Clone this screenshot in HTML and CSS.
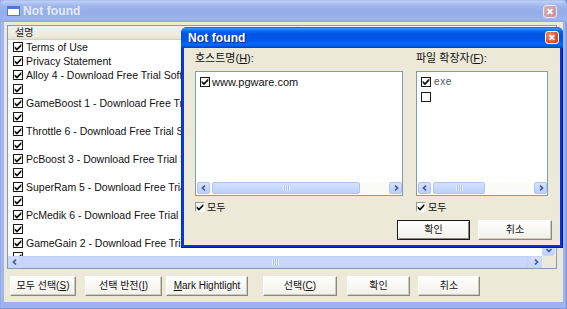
FILE: index.html
```html
<!DOCTYPE html>
<html>
<head>
<meta charset="utf-8">
<link rel="stylesheet" href="styles.css">
</head>
<body>
<div class="win">
  <div class="win-title">
    <span class="app-icon"><svg viewBox="0 0 13 10"><rect x="0.5" y="0.5" width="12" height="9" fill="#fff" stroke="#5A78C8"/><rect x="1" y="1" width="11" height="2" fill="#4F73D6"/></svg></span>
    <span class="title-text inactive-text">Not found</span>
    <span class="close close-off"><svg viewBox="0 0 13 13"><path d="M4 4 L9 9 M9 4 L4 9"/></svg></span>
  </div>
  <div class="win-body">
    <div class="list">
      <div class="list-main">
        <div class="list-head"><span class="head-cell">설명</span><span class="head-cell2"></span></div>
        <div class="row"><span class="cb on"></span><span>Terms of Use</span></div>
        <div class="row"><span class="cb on"></span><span>Privacy Statement</span></div>
        <div class="row"><span class="cb on"></span><span>Alloy 4 - Download Free Trial Software</span></div>
        <div class="row"><span class="cb on"></span><span></span></div>
        <div class="row"><span class="cb on"></span><span>GameBoost 1 - Download Free Trial Software</span></div>
        <div class="row"><span class="cb on"></span><span></span></div>
        <div class="row"><span class="cb on"></span><span>Throttle 6 - Download Free Trial Software</span></div>
        <div class="row"><span class="cb on"></span><span></span></div>
        <div class="row"><span class="cb on"></span><span>PcBoost 3 - Download Free Trial Software</span></div>
        <div class="row"><span class="cb on"></span><span></span></div>
        <div class="row"><span class="cb on"></span><span>SuperRam 5 - Download Free Trial Software</span></div>
        <div class="row"><span class="cb on"></span><span></span></div>
        <div class="row"><span class="cb on"></span><span>PcMedik 6 - Download Free Trial Software</span></div>
        <div class="row"><span class="cb on"></span><span></span></div>
        <div class="row"><span class="cb on"></span><span>GameGain 2 - Download Free Trial Software</span></div>
        <div class="row"><span class="cb on"></span><span></span></div>
      </div>
      <div class="vscroll"><span class="sb-arrow pale vdown"><svg viewBox="0 0 8 8"><path d="M1.5 3 L4 5.5 L6.5 3"/></svg></span></div>
      <div class="sb pale-sb">
        <span class="sb-arrow pale"><svg viewBox="0 0 8 8"><path d="M5 1.5 L2.5 4 L5 6.5"/></svg></span>
        <span class="sb-thumb pale-thumb fill"><i class="grip"></i></span>
        <span class="sb-arrow pale"><svg viewBox="0 0 8 8"><path d="M3 1.5 L5.5 4 L3 6.5"/></svg></span>
      </div>
      <div class="corner"></div>
    </div>
    <div class="btnbar">
      <span class="btn b1">모두 선택(<u>S</u>)</span>
      <span class="btn b2">선택 반전(<u>I</u>)</span>
      <span class="btn b3"><u>M</u>ark Hightlight</span>
      <span class="btn b4">선택(<u>C</u>)</span>
      <span class="btn b5">확인</span>
      <span class="btn b6">취소</span>
    </div>
  </div>
</div>

<div class="dialog">
  <div class="dlg-title">
    <span class="title-text">Not found</span>
    <span class="close close-on"><svg viewBox="0 0 13 13"><path d="M4 4 L9 9 M9 4 L4 9"/></svg></span>
  </div>
  <div class="dlg-body">
    <div class="cols">
      <div class="col host">
        <div class="label">호스트명(<u>H</u>):</div>
        <div class="lbox">
          <div class="items">
            <div class="item"><span class="cb on"></span><span class="host-text">www.pgware.com</span></div>
          </div>
          <div class="sb">
            <span class="sb-arrow"><svg viewBox="0 0 8 8"><path d="M5 1.5 L2.5 4 L5 6.5"/></svg></span>
            <span class="sb-thumb host-thumb"><i class="grip"></i></span>
            <span class="sb-track"></span>
            <span class="sb-arrow"><svg viewBox="0 0 8 8"><path d="M3 1.5 L5.5 4 L3 6.5"/></svg></span>
          </div>
        </div>
        <div class="checkrow"><span class="cb cb3d on"></span><span class="ck-text">모두</span></div>
      </div>
      <div class="col ext">
        <div class="label">파일 확장자(<u>F</u>):</div>
        <div class="lbox">
          <div class="items ext-items">
            <div class="item ext-item"><span class="cb on"></span><span class="ext-text">exe</span></div>
            <div class="item ext-item"><span class="cb"></span></div>
          </div>
          <div class="sb">
            <span class="sb-arrow"><svg viewBox="0 0 8 8"><path d="M5 1.5 L2.5 4 L5 6.5"/></svg></span>
            <span class="sb-thumb ext-thumb"><i class="grip"></i></span>
            <span class="sb-track"></span>
            <span class="sb-arrow"><svg viewBox="0 0 8 8"><path d="M3 1.5 L5.5 4 L3 6.5"/></svg></span>
          </div>
        </div>
        <div class="checkrow"><span class="cb cb3d on"></span><span class="ck-text">모두</span></div>
      </div>
    </div>
    <div class="dlg-btns">
      <span class="btn def d1">확인</span>
      <span class="btn d2">취소</span>
    </div>
  </div>
</div>
</body>
</html>
```

FILE: styles.css
```css
* { box-sizing: border-box; }
html, body { margin: 0; padding: 0; }
body {
  width: 567px;
  height: 309px;
  overflow: hidden;
  position: relative;
  background: #ECE9D8;
  font-family: "Liberation Sans", "Noto Sans CJK KR", sans-serif;
  font-size: 11px;
  color: #000;
}
u { text-decoration: underline; text-underline-offset: 1px; }

/* ---------- outer (inactive) window ---------- */
.win {
  width: 567px;
  height: 309px;
  display: flex;
  flex-direction: column;
  background: linear-gradient(90deg, #7D96DC 0, #A9BEF1 1px, #9CB3EC 3px, #9CB3EC 564px, #A6BBEF 565px, #7D96DC 566px);
  border-bottom: 1px solid #7D96DC;
}
.win-title {
  height: 22px;
  flex: none;
  display: flex;
  align-items: center;
  padding: 0 10px 0 7px;
  border-radius: 6px 6px 0 0;
  background: linear-gradient(#A9BDF0 0%, #BCCDF6 8%, #AEC2F2 16%, #9DB4EC 30%, #93ACEA 55%, #97AFEB 72%, #9FB5EE 86%, #8FA7E6 100%);
}
.app-icon { width: 13px; height: 10px; display: flex; margin-right: 3px; }
.app-icon svg { width: 13px; height: 10px; }
.title-text {
  font-weight: bold;
  font-size: 12px;
  line-height: 14px;
  color: #fff;
  flex: 1;
  letter-spacing: 0.1px;
}
.inactive-text { color: #E4ECFB; }
.close {
  width: 14px;
  height: 13px;
  border-radius: 3px;
  display: flex;
  align-items: center;
  justify-content: center;
}
.close svg { width: 13px; height: 13px; fill: none; stroke: #fff; stroke-width: 1.8; }
.close-off {
  background: linear-gradient(135deg, #DBB3B6, #C4909A);
  border: 1px solid #EDE6F3;
}
.close-on {
  background: radial-gradient(circle at 35% 35%, #F39A7A, #E0582F 55%, #C8401C);
  border: 1px solid #fff;
}

.win-body {
  flex: 1;
  margin: 0 4px 6px;
  background: #ECE9D8;
  padding: 3px 6px 0 3px;
  display: flex;
  flex-direction: column;
}

/* list view */
.list {
  height: 244px;
  flex: none;
  border: 1px solid #7F9DB9;
  background: #fff;
  display: grid;
  grid-template-columns: 1fr 14px;
  grid-template-rows: 1fr 12px;
}
.list-main { overflow: hidden; }
.list-head {
  height: 14px;
  display: flex;
  background: linear-gradient(#F3F2EA, #EBEADB 80%, #E2DECD);
  border-bottom: 1px solid #D5D2C4;
}
.head-cell {
  width: 290px;
  padding-left: 7px;
  font-size: 10px;
  line-height: 13px;
  color: #222;
  border-right: 1px solid #D5D2C4;
}
.row {
  height: 14px;
  display: flex;
  align-items: center;
  padding-left: 5px;
  font-size: 10.5px;
  line-height: 12px;
  color: #111;
  white-space: nowrap;
}
.cb {
  width: 10px;
  height: 10px;
  flex: none;
  margin-right: 3px;
  border: 1px solid #1a1a1a;
  background: #fff;
  position: relative;
}
.cb.on::after {
  content: "";
  position: absolute;
  inset: 0;
  background: #111;
  clip-path: polygon(8% 40%, 37% 65%, 92% 10%, 92% 42%, 37% 96%, 8% 70%);
}
.cb3d {
  border-color: #9A9A94 #FFFFFF #FFFFFF #9A9A94;
}

.vscroll {
  grid-row: 1;
  grid-column: 2;
  background: #F4F3EE;
  display: flex;
  flex-direction: column;
  justify-content: flex-end;
}
.vdown { height: 13px; width: 14px; }
.corner { background: #ECE9D8; }

/* scrollbars */
.sb { display: flex; height: 12px; flex: none; }
.sb-arrow {
  width: 13px;
  flex: none;
  background: linear-gradient(#D6E2FD, #BBCEFA);
  border: 1px solid #B0C4F4;
  border-radius: 2px;
  display: flex;
  align-items: center;
  justify-content: center;
}
.sb-arrow svg { width: 8px; height: 8px; fill: none; stroke: #3F5A95; stroke-width: 1.7; }
.sb-thumb {
  background: linear-gradient(#D3E0FD, #BED1FA);
  border: 1px solid #AFC4F2;
  border-radius: 2px;
  display: flex;
  align-items: center;
  justify-content: center;
  margin-left: 2px;
}
.grip {
  width: 7px;
  height: 6px;
  background: repeating-linear-gradient(90deg, #EEF3FE 0 1px, #A8BDEA 1px 2px);
  opacity: 0.8;
}
.sb-track { flex: 1; background: #FBFBF8; }
.pale-sb { background: #C9D7F9; }
.sb-arrow.pale { background: linear-gradient(#D3DFFB, #C3D3F8); border-color: #C6D5F8; }
.pale-thumb { background: #C8D7F9; border-color: #C0D0F6; margin-left: 1px; margin-right: 1px; }
.fill { flex: 1; }

/* buttons */
.btnbar {
  display: flex;
  height: 20px;
  margin-top: 7px;
  padding-left: 3px;
}
.btn {
  height: 20px;
  display: flex;
  align-items: center;
  justify-content: center;
  font-size: 10px;
  line-height: 12px;
  color: #111;
  background: linear-gradient(#FEFEFC, #F1F0EA);
  border: 1px solid;
  border-color: #FFFFFF #8A877C #8A877C #FFFFFF;
  box-shadow: inset -1px -1px 0 #CFCCBF;
  white-space: nowrap;
}
.b1 { width: 66px; }
.b2 { width: 77px; margin-left: 9px; }
.b3 { width: 82px; margin-left: 4px; }
.b4 { width: 74px; margin-left: 15px; }
.b5 { width: 63px; margin-left: 10px; }
.b6 { width: 62px; margin-left: 8px; }

/* ---------- dialog (active) ---------- */
.dialog {
  position: absolute;
  left: 181px;
  top: 27px;
  width: 382px;
  height: 221px;
  display: flex;
  flex-direction: column;
  background: linear-gradient(90deg, #0019B8 0, #0A3FE0 1px, #0831D9 3px, #0831D9 379px, #0A3FE0 380px, #0019B8 381px);
  border-bottom: 1px solid #0019B8;
  border-radius: 6px 6px 0 0;
}
.dlg-title {
  height: 21px;
  flex: none;
  display: flex;
  align-items: center;
  padding: 0 4px 0 7px;
  border-radius: 6px 6px 0 0;
  background: linear-gradient(#0058EE 0%, #3593FF 6%, #288EFF 10%, #127DFF 14%, #036FFC 18%, #0262EE 24%, #0057E5 30%, #0054E3 40%, #0055EB 60%, #005BF5 70%, #026AFE 80%, #0062EF 88%, #0052D6 94%, #0040AB 100%);
}
.dlg-title .title-text { text-shadow: 1px 1px 0 #0A1E8A; }
.dlg-body {
  flex: 1;
  margin: 0 3px 2px;
  background: #ECE9D8;
  padding: 4px 8px 0 11px;
  display: flex;
  flex-direction: column;
}
.cols { display: flex; gap: 13px; }
.col { display: flex; flex-direction: column; }
.host { width: 208px; }
.ext { width: 132px; }
.label {
  height: 12px;
  line-height: 12px;
  font-size: 11px;
  color: #111;
  margin-bottom: 7px;
  white-space: nowrap;
}
.lbox {
  height: 125px;
  border: 1px solid #7F9DB9;
  background: #fff;
  display: flex;
  flex-direction: column;
}
.items { flex: 1; padding: 2px 0 0 4px; }
.item { height: 15px; display: flex; align-items: center; line-height: 12px; }
.item .cb { margin-right: 2px; }
.host-text { font-size: 11px; color: #111; }
.ext-text { font-size: 10px; color: #555; letter-spacing: 0.6px; margin-left: 1px; }
.ext-item { height: 15px; }
.lbox .sb { margin: 0 0 1px 0; padding-left: 1px; }
.host-thumb { width: 148px; }
.ext-thumb { width: 52px; }
.checkrow {
  margin-top: 5px;
  height: 12px;
  display: flex;
  align-items: center;
  font-size: 10px;
  line-height: 11px;
  color: #111;
}
.ck-text { line-height: 11px; }
.checkrow .cb { margin-right: 2px; }
.dlg-btns {
  display: flex;
  justify-content: flex-end;
  gap: 8px;
  margin-top: 7px;
}
.d1 { width: 73px; }
.d2 { width: 74px; }
.btn.def {
  border: 1px solid #1A1A1A;
  box-shadow: inset 1px 1px 0 #FFFFFF, inset -1px -1px 0 #8A877C;
}
```
